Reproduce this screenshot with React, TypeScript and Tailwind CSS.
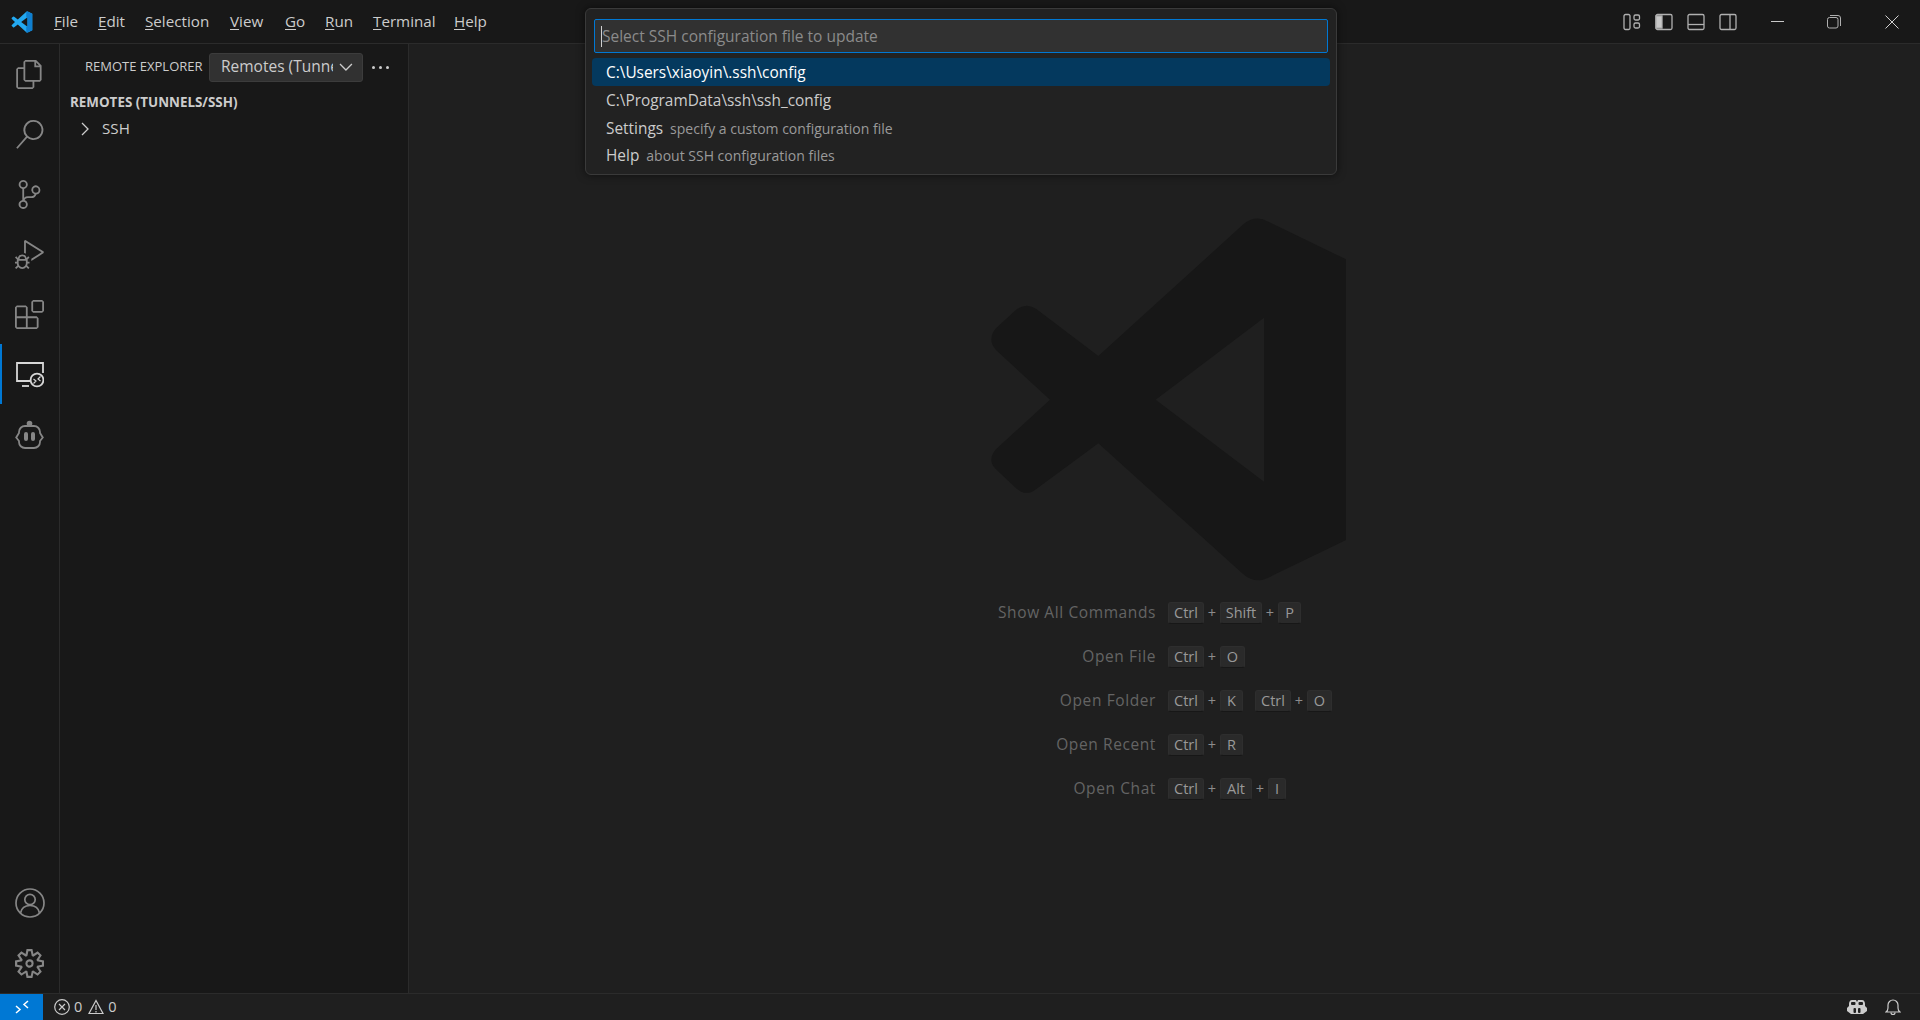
import type { ReactNode } from 'react'

const LOGO_OUTER =
  'M850 100Q885 70 925 92L1158 205V1047L925 1160Q885 1180 850 1150L415 757L230 893Q200 918 170 893L108 835Q80 808 108 775L270 626L108 477Q80 445 108 412L170 355Q200 333 230 355L415 495ZM912 380L587 626L912 872Z'

const menus = [
  { key: 'F', rest: 'ile', w: 'w-[44px]' },
  { key: 'E', rest: 'dit', w: 'w-[47px]' },
  { key: 'S', rest: 'election', w: 'w-[85px]' },
  { key: 'V', rest: 'iew', w: 'w-[55px]' },
  { key: 'G', rest: 'o', w: 'w-[40px]' },
  { key: 'R', rest: 'un', w: 'w-[48px]' },
  { key: 'T', rest: 'erminal', w: 'w-[81px]' },
  { key: 'H', rest: 'elp', w: 'w-[50px]' },
]

function Icon24({ d, className }: { d: string; className?: string }) {
  return (
    <svg viewBox="0 0 24 24" className={className ?? 'w-[29px] h-[29px]'} fill="#868686" fillRule="evenodd">
      <path d={d} />
    </svg>
  )
}

function RemoteIcon() {
  return (
    <svg viewBox="0 0 29 29" className="w-[29px] h-[29px]" fill="none" stroke="#d7d7d7" strokeWidth="1.8">
      <path d="M17 21H2V3h26v10" />
      <path d="M7 26h7" />
      <circle cx="22" cy="20" r="6.4" fill="#181818" />
      <path d="M18.500 19l2.500 2-2.500 2.500M25.500 16.500l-2.500 2.500 2.500 2" strokeWidth="1.200" />
    </svg>
  )
}

function RobotIcon() {
  return (
    <svg viewBox="0 0 29 29" className="w-[29px] h-[29px]" fill="none" stroke="#868686" strokeWidth="1.8">
      <circle cx="14.500" cy="3.500" r="2.800" fill="#868686" stroke="none" />
      <path d="M10 6h9a6 6 0 0 1 6 6v1l2.800 4.500L25 21v1a6 6 0 0 1-6 6H10a6 6 0 0 1-6-6v-1l-2.800-3.500L4 13v-1a6 6 0 0 1 6-6z" />
      <rect x="9" y="12" width="4" height="9" rx="2" fill="#868686" stroke="none" />
      <rect x="16" y="12" width="4" height="9" rx="2" fill="#868686" stroke="none" />
    </svg>
  )
}

function AccountIcon() {
  return (
    <svg viewBox="0 0 30 30" className="w-[30px] h-[30px]" fill="none" stroke="#868686" strokeWidth="1.7">
      <circle cx="15" cy="15" r="14" />
      <circle cx="15" cy="11.500" r="5.200" />
      <path d="M5.500 25c1-5 5-7.500 9.500-7.500s8.500 2.500 9.500 7.500" />
    </svg>
  )
}

function ActivityItem({ children, active }: { children: ReactNode; active?: boolean }) {
  return (
    <div className={`h-[60px] flex items-center justify-center border-l-2 pr-[2px] ${active ? 'border-[#0078d4]' : 'border-transparent'}`}>
      {children}
    </div>
  )
}

function LayoutIcon({ children }: { children: ReactNode }) {
  return (
    <svg viewBox="0 0 18 18" className="w-[18px] h-[18px]" fill="none" stroke="#b0b0b0" strokeWidth="1.300">
      {children}
    </svg>
  )
}

function Key({ children, w }: { children: ReactNode; w: string }) {
  return (
    <span className={`${w} h-[22px] flex items-center justify-center rounded-[3px] bg-[#2a2a2a] border border-[#2e2e2e] border-b-[#171717] text-[#999999] text-[14.5px] leading-none`}>
      {children}
    </span>
  )
}

function Plus() {
  return <span className="w-4 text-center text-[#8c8c8c] text-[14.5px] leading-none">+</span>
}

function Shortcut({ label, children }: { label: string; children: ReactNode }) {
  return (
    <div className="h-[44px] flex items-center">
      <span className="w-[196px] text-right text-[#646464] text-[15.5px] tracking-[0.6px] whitespace-nowrap">{label}</span>
      <div className="ml-[12px] flex items-center">{children}</div>
    </div>
  )
}

function QuickRow({ label, desc, selected }: { label: string; desc?: string; selected?: boolean }) {
  return (
    <div className={`h-[27.7px] flex items-center pl-[14px] pt-[2px] rounded-[4px] whitespace-nowrap ${selected ? 'bg-[#04395e] text-white' : 'text-[#cccccc]'}`}>
      <span className="text-[15.4px]">{label}</span>
      {desc && <span className="ml-[7px] text-[14px] text-[#9a9a9a]">{desc}</span>}
    </div>
  )
}

export default function App() {
  return (
    <div className="relative w-[1920px] h-[1020px] overflow-hidden flex flex-col bg-[#1f1f1f] font-['Open_Sans','Noto_Sans',sans-serif]">
      {/* title bar */}
      <div className="h-[44px] shrink-0 flex items-center bg-[#181818] border-b border-[#2b2b2b]">
        <svg viewBox="80 60 1100 1130" className="ml-[11px] w-[22px] h-[22px]">
          <path d={LOGO_OUTER} fill="#23a9f1" fillRule="evenodd" />
          <path d="M850 100Q885 70 925 92L1158 205V1047L925 1160Q885 1180 850 1150V870L912 872V380L850 400Z" fill="#0f7fd0" />
        </svg>
        <div className="ml-[21px] flex text-[15.2px] text-[#cccccc]">
          {menus.map((m) => (
            <span key={m.key} className={m.w}>
              <span className="underline underline-offset-2">{m.key}</span>
              {m.rest}
            </span>
          ))}
        </div>
        <div className="ml-auto flex items-center gap-[14px] mr-[183px]">
          <LayoutIcon>
            <rect x="1" y="1.500" width="6" height="15" rx="1.500" />
            <rect x="11" y="2" width="5.500" height="5" rx="1.500" />
            <rect x="11" y="10" width="5.500" height="5" rx="1.500" />
          </LayoutIcon>
          <LayoutIcon>
            <rect x="1" y="1.500" width="16" height="15" rx="1.500" />
            <path d="M1 3h6v12H1z" fill="#c8c8c8" />
          </LayoutIcon>
          <LayoutIcon>
            <rect x="1" y="1.500" width="16" height="15" rx="1.500" />
            <path d="M1 11.500h16" />
          </LayoutIcon>
          <LayoutIcon>
            <rect x="1" y="1.500" width="16" height="15" rx="1.500" />
            <path d="M11 1.500v15" />
          </LayoutIcon>
        </div>
        <div className="absolute right-0 top-0 h-[43px] flex items-center">
          <svg viewBox="0 0 14 14" className="w-[14px] h-[14px] mr-[42px]" stroke="#c8c8c8" fill="none">
            <path d="M0 6.500h13" />
          </svg>
          <svg viewBox="0 0 14 14" className="w-[14px] h-[14px] mr-[44px]" stroke="#b0b0b0" fill="none">
            <rect x="0.500" y="2.500" width="10.500" height="10.500" rx="2" />
            <path d="M3 0.500h8a2.500 2.500 0 0 1 2.500 2.500v8" />
          </svg>
          <svg viewBox="0 0 14 14" className="w-[14px] h-[14px] mr-[21px]" stroke="#d0d0d0" fill="none">
            <path d="M0.500 0.500l13 13M13.500 0.500l-13 13" />
          </svg>
        </div>
      </div>

      <div className="flex-1 flex min-h-0">
        {/* activity bar */}
        <div className="w-[60px] shrink-0 flex flex-col bg-[#181818] border-r border-[#2b2b2b]">
          <ActivityItem>
            <Icon24 d="M17.500 0h-9L7 1.500V6H2.500L1 7.500v15.070L2.500 24h12.070L16 22.570V18h4.700l1.300-1.430V4.500L17.500 0zm0 2.120l2.380 2.380H17.500V2.120zm-3 20.380h-12v-15H7v9.070L8.500 18h6v4.500zm6-6h-12v-15H16V6h4.500v10.500z" />
          </ActivityItem>
          <ActivityItem>
            <Icon24 d="M15.250 0a8.250 8.250 0 0 0-6.180 13.720L1 22.880l1.120 1 8.050-9.120A8.251 8.251 0 1 0 15.250.01V0zm0 15a6.750 6.750 0 1 1 0-13.500 6.750 6.750 0 0 1 0 13.500z" />
          </ActivityItem>
          <ActivityItem>
            <Icon24 d="M21.007 8.222A3.738 3.738 0 0 0 15.045 5.200a3.737 3.737 0 0 0 1.156 6.583 2.988 2.988 0 0 1-2.668 1.670h-2.990a4.456 4.456 0 0 0-2.989 1.165V7.400a3.737 3.737 0 1 0-1.494 0v9.117a3.776 3.776 0 1 0 1.816.099 2.990 2.990 0 0 1 2.668-1.667h2.990a4.484 4.484 0 0 0 4.223-3.039 3.736 3.736 0 0 0 3.250-3.687zM4.565 3.738a2.242 2.242 0 1 1 4.484 0 2.242 2.242 0 0 1-4.484 0zm4.484 16.441a2.242 2.242 0 1 1-4.484 0 2.242 2.242 0 0 1 4.484 0zm8.221-9.715a2.242 2.242 0 1 1 0-4.485 2.242 2.242 0 0 1 0 4.485z" />
          </ActivityItem>
          <ActivityItem>
            <Icon24 d="M10.940 13.500l-1.320 1.320a3.730 3.730 0 0 0-7.240 0L1.060 13.500 0 14.560l1.720 1.720-.22.220V18H0v1.500h1.500v.080c.077.489.214.966.410 1.420L0 22.940 1.060 24l1.650-1.650A4.308 4.308 0 0 0 6 24a4.310 4.310 0 0 0 3.290-1.650L10.940 24 12 22.940 10.090 21c.198-.464.336-.951.410-1.450v-.100H12V18h-1.500v-1.500l-.220-.220L12 14.560l-1.060-1.060zM6 13.500a2.250 2.250 0 0 1 2.250 2.250h-4.500A2.250 2.250 0 0 1 6 13.500zm3 6a3.330 3.330 0 0 1-3 3 3.330 3.330 0 0 1-3-3v-2.250h6v2.250zm14.760-9.900v1.260L13.500 17.370v-1.770l8.450-5.370L9 2v9.460a5.070 5.070 0 0 0-1.500-.720V.630L8.640 0l15.120 9.600z" />
          </ActivityItem>
          <ActivityItem>
            <Icon24 d="M13.500 1.500L15 0h7.500L24 1.500V9l-1.500 1.500H15L13.500 9V1.500zm1.500 0V9h7.500V1.500H15zM0 15V6l1.500-1.500H9L10.500 6v7.500H18l1.500 1.500v7.500L18 24H1.500L0 22.500V15zm9-1.500V6H1.500v7.500H9zM9 15H1.500v7.500H9V15zm1.500 7.500H18V15h-7.500v7.500z" />
          </ActivityItem>
          <ActivityItem active>
            <RemoteIcon />
          </ActivityItem>
          <ActivityItem>
            <RobotIcon />
          </ActivityItem>
          <div className="mt-auto">
            <ActivityItem>
              <AccountIcon />
            </ActivityItem>
            <ActivityItem>
              <Icon24 d="M19.850 8.750l4.150.830v4.840l-4.150.830 2.350 3.520-3.430 3.430-3.520-2.350-.830 4.150H9.580l-.830-4.150-3.520 2.350-3.430-3.430 2.350-3.520L0 14.420V9.580l4.150-.830L1.800 5.230 5.230 1.800l3.520 2.350L9.580 0h4.840l.830 4.150 3.520-2.350 3.430 3.430-2.350 3.520zm-1.570 5.070l4-.810v-2l-4-.810-.540-1.300 2.290-3.430-1.430-1.430-3.430 2.290-1.300-.540-.810-4h-2l-.810 4-1.300.540-3.430-2.290-1.430 1.430L6.380 8.900l-.540 1.300-4 .810v2l4 .810.540 1.300-2.290 3.430 1.430 1.430 3.430-2.290 1.300.540.810 4h2l.810-4 1.300-.540 3.430 2.290 1.430-1.430-2.290-3.430.540-1.300zm-8.186-4.672A3.430 3.430 0 0 1 12 8.570 3.440 3.440 0 0 1 15.430 12a3.430 3.430 0 1 1-5.336-2.852zm.956 4.274c.281.188.612.288.950.288A1.700 1.700 0 0 0 13.710 12a1.710 1.710 0 1 0-2.660 1.422z" />
            </ActivityItem>
          </div>
        </div>

        {/* sidebar */}
        <div className="w-[349px] shrink-0 bg-[#181818] border-r border-[#2b2b2b] text-[#cccccc]">
          <div className="h-[44px] mt-[1px] flex items-center pl-[25px]">
            <span className="text-[13px] whitespace-nowrap w-[124px]">REMOTE EXPLORER</span>
            <div className="w-[154px] h-[29px] flex items-center pl-[11px] pr-[9px] bg-[#313131] border border-[#3c3c3c] rounded-[3px]">
              <span className="w-[113px] overflow-hidden whitespace-nowrap text-[15.5px]">Remotes (Tunnels/SSH)</span>
              <svg viewBox="0 0 14 8" className="ml-[6px] w-[14px] h-[8px]" fill="none" stroke="#cccccc" strokeWidth="1.300">
                <path d="M1 1l6 6 6-6" />
              </svg>
            </div>
            <div className="ml-[9px] flex gap-[4px]">
              <span className="w-[3px] h-[3px] rounded-full bg-[#cccccc]" />
              <span className="w-[3px] h-[3px] rounded-full bg-[#cccccc]" />
              <span className="w-[3px] h-[3px] rounded-full bg-[#cccccc]" />
            </div>
          </div>
          <div className="h-[26px] flex items-center pl-[10px] text-[13.4px] font-bold whitespace-nowrap">REMOTES (TUNNELS/SSH)</div>
          <div className="h-[27px] flex items-center pl-[21px]">
            <svg viewBox="0 0 8 14" className="w-[8px] h-[14px]" fill="none" stroke="#cccccc" strokeWidth="1.300">
              <path d="M1 1l6 6-6 6" />
            </svg>
            <span className="ml-[13px] text-[15.2px]">SSH</span>
          </div>
        </div>

        {/* editor watermark */}
        <div className="flex-1 pl-[551px] pt-[147px]">
          <svg viewBox="0 0 1200 1200" className="w-[400px] h-[400px]">
            <path d={LOGO_OUTER} fill="#171717" fillRule="evenodd" />
          </svg>
          <div>
            <Shortcut label="Show All Commands">
              <Key w="w-[36px]">Ctrl</Key>
              <Plus />
              <Key w="w-[42px]">Shift</Key>
              <Plus />
              <Key w="w-[23px]">P</Key>
            </Shortcut>
            <Shortcut label="Open File">
              <Key w="w-[36px]">Ctrl</Key>
              <Plus />
              <Key w="w-[25px]">O</Key>
            </Shortcut>
            <Shortcut label="Open Folder">
              <Key w="w-[36px]">Ctrl</Key>
              <Plus />
              <Key w="w-[23px]">K</Key>
              <span className="w-[12px]" />
              <Key w="w-[36px]">Ctrl</Key>
              <Plus />
              <Key w="w-[25px]">O</Key>
            </Shortcut>
            <Shortcut label="Open Recent">
              <Key w="w-[36px]">Ctrl</Key>
              <Plus />
              <Key w="w-[23px]">R</Key>
            </Shortcut>
            <Shortcut label="Open Chat">
              <Key w="w-[36px]">Ctrl</Key>
              <Plus />
              <Key w="w-[32px]">Alt</Key>
              <Plus />
              <Key w="w-[18px]">I</Key>
            </Shortcut>
          </div>
        </div>
      </div>

      {/* status bar */}
      <div className="h-[27px] shrink-0 flex items-center bg-[#1f1f1f] border-t border-[#2b2b2b] text-[#cccccc] text-[14.5px]">
        <div className="w-[43px] h-full flex items-center justify-center bg-[#0078d4]">
          <svg viewBox="0 0 16 16" className="w-[16px] h-[16px]" fill="none" stroke="#ffffff" strokeWidth="1.500">
            <path d="M2 7l4 3.500-4 3.500M14 2l-4 3.500 4 3.500" />
          </svg>
        </div>
        <svg viewBox="0 0 16 16" className="ml-[11px] w-[16px] h-[16px]" fill="none" stroke="#cccccc" strokeWidth="1.200">
          <circle cx="8" cy="8" r="7.300" />
          <path d="M5 5l6 6M11 5l-6 6" />
        </svg>
        <span className="ml-[4px]">0</span>
        <svg viewBox="0 0 16 16" className="ml-[6px] w-[16px] h-[16px]" fill="none" stroke="#cccccc" strokeWidth="1.200">
          <path d="M8 1.500L15 14.500H1z" />
          <path d="M8 6v5M8 12v1.500" />
        </svg>
        <span className="ml-[4px]">0</span>
        <div className="ml-auto flex items-center mr-[19px]">
          <svg viewBox="0 0 20 16" className="w-[20px] h-[16px]" fill="#cccccc">
            <path d="M5 1h4l1 2 1-2h4c2 0 3 2 3 4v2l2 2v3l-4 3H4l-4-3V9l2-2V5c0-2 1-4 3-4z" />
            <rect x="6.500" y="9" width="2.500" height="5" rx="1" fill="#1f1f1f" />
            <rect x="11" y="9" width="2.500" height="5" rx="1" fill="#1f1f1f" />
            <rect x="4" y="3" width="4.500" height="3" rx="1" fill="#1f1f1f" />
            <rect x="11.500" y="3" width="4.500" height="3" rx="1" fill="#1f1f1f" />
          </svg>
          <svg viewBox="0 0 16 18" className="ml-[18px] w-[16px] h-[18px]" fill="none" stroke="#cccccc" strokeWidth="1.200">
            <path d="M1 14c1.500-1 2-2 2-4V7a5 5 0 0 1 10 0v3c0 2 .500 3 2 4z" />
            <path d="M6 14.500a2 2 0 0 0 4 0" />
          </svg>
        </div>
      </div>

      {/* quick input overlay */}
      <div className="absolute left-[585px] top-[8px] w-[752px] h-[167px] rounded-[6px] bg-[#222222] border border-[#3a3a3a] shadow-[0_0_8px_#00000090] px-[6px] pt-[10px]">
        <div className="mx-[2px] h-[34px] flex items-center bg-[#313131] border border-[#0078d4] rounded-[2px] pl-[6px] text-[15.5px] text-[#8b8b8b] whitespace-nowrap">
          <span className="w-px h-[21px] bg-[#d0d0d0]" />
          <span className="mt-[2px]">Select SSH configuration file to update</span>
        </div>
        <div className="mt-[5px]">
          <QuickRow label="C:\Users\xiaoyin\.ssh\config" selected />
          <QuickRow label="C:\ProgramData\ssh\ssh_config" />
          <QuickRow label="Settings" desc="specify a custom configuration file" />
          <QuickRow label="Help" desc="about SSH configuration files" />
        </div>
      </div>
    </div>
  )
}
